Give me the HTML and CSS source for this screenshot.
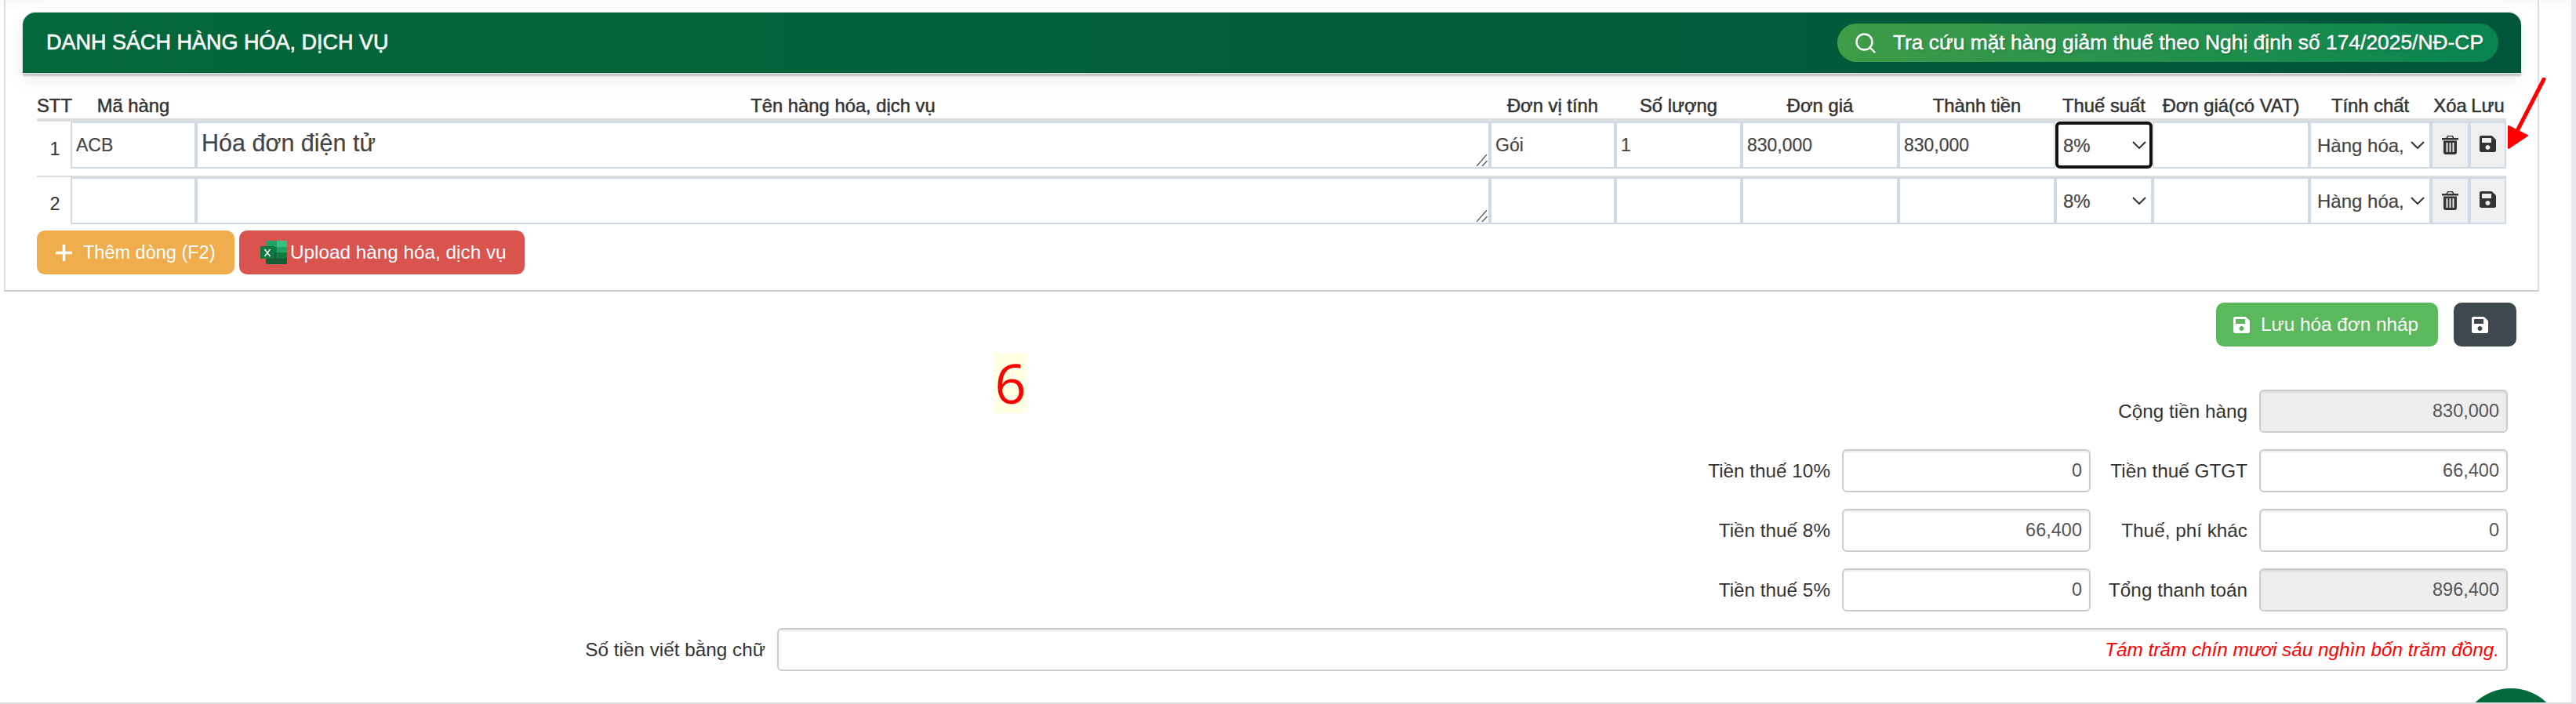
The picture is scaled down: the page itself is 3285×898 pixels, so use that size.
FILE: index.html
```html
<!DOCTYPE html>
<html lang="vi">
<head>
<meta charset="utf-8">
<title>Danh sách hàng hóa, dịch vụ</title>
<link rel="stylesheet" href="styles.css">
</head>
<body>
<svg class="defs" width="0" height="0" aria-hidden="true">
  <symbol id="i-save" viewBox="0 0 448 448"><path transform="translate(0 -32)" d="M433.941 129.941l-83.882-83.882A48 48 0 0 0 316.118 32H48C21.49 32 0 53.49 0 80v352c0 26.51 21.49 48 48 48h352c26.51 0 48-21.49 48-48V163.882a48 48 0 0 0-14.059-33.941zM224 416c-35.346 0-64-28.654-64-64 0-35.346 28.654-64 64-64s64 28.654 64 64c0 35.346-28.654 64-64 64zm96-304.52V212c0 6.627-5.373 12-12 12H76c-6.627 0-12-5.373-12-12V108c0-6.627 5.373-12 12-12h228.52c3.183 0 6.235 1.264 8.485 3.515l3.48 3.48A11.996 11.996 0 0 1 320 111.48z"/></symbol>
  <symbol id="i-trash" viewBox="0 0 21 24"><path d="M7 0h7l1.5 3H21v2.400H0V3h5.500zM8 1.300 7.300 3h6.400L13 1.300z"/><path fill-rule="evenodd" d="M2 6.500h17V21a3 3 0 0 1-3 3H5a3 3 0 0 1-3-3zM5.500 9v12h2V9zm4 0v12h2V9zm4 0v12h2V9z"/></symbol>
  <symbol id="i-chev" viewBox="0 0 18 10"><path d="M1 1l8 8 8-8" fill="none" stroke="#333" stroke-width="2"/></symbol>
  <symbol id="i-grip" viewBox="0 0 14 15"><path d="M0 15L13 0M7 15l6.500-7" fill="none" stroke="#555" stroke-width="1.300"/></symbol>
</svg>
<div class="page">
  <section class="card">
    <header class="card-head">
      <h2 class="card-title">DANH SÁCH HÀNG HÓA, DỊCH VỤ</h2>
      <button class="lookup" type="button">
        <svg class="lookup-icon" viewBox="0 0 26 26"><circle cx="11.500" cy="11.500" r="10" fill="none" stroke="#fff" stroke-width="2.400"/><path d="M18.500 18.500l6 6" stroke="#fff" stroke-width="2.400" stroke-linecap="round"/></svg>
        <span>Tra cứu mặt hàng giảm thuế theo Nghị định số 174/2025/NĐ-CP</span>
      </button>
    </header>
    <div class="card-body">
      <table class="items">
        <colgroup>
          <col class="c-stt"><col class="c-code"><col class="c-name"><col class="c-unit"><col class="c-qty"><col class="c-price"><col class="c-total"><col class="c-tax"><col class="c-vat"><col class="c-kind"><col class="c-del"><col class="c-save">
        </colgroup>
        <thead>
          <tr>
            <th>STT</th><th>Mã hàng</th><th>Tên hàng hóa, dịch vụ</th><th>Đơn vị tính</th><th>Số lượng</th><th>Đơn giá</th><th>Thành tiền</th><th>Thuế suất</th><th>Đơn giá(có VAT)</th><th>Tính chất</th><th>Xóa</th><th>Lưu</th>
          </tr>
        </thead>
        <tbody>
          <tr class="row-first">
            <td class="num">1</td>
            <td><input class="cell" value="ACB"></td>
            <td><div class="pick"><textarea class="cell cell-area">Hóa đơn điện tử</textarea><svg class="grip"><use href="#i-grip"/></svg></div></td>
            <td><input class="cell" value="Gói"></td>
            <td><input class="cell" value="1"></td>
            <td><input class="cell" value="830,000"></td>
            <td><input class="cell" value="830,000"></td>
            <td><div class="pick"><select class="cell cell-select is-focus"><option>8%</option></select><svg class="chev"><use href="#i-chev"/></svg></div></td>
            <td><input class="cell"></td>
            <td><div class="pick"><select class="cell cell-select kind"><option>Hàng hóa, dịch vụ</option></select><svg class="chev"><use href="#i-chev"/></svg></div></td>
            <td><button class="tool" type="button"><svg class="ico-trash"><use href="#i-trash"/></svg></button></td>
            <td><button class="tool" type="button"><svg class="ico-save"><use href="#i-save"/></svg></button></td>
          </tr>
          <tr class="row-next">
            <td class="num">2</td>
            <td><input class="cell"></td>
            <td><div class="pick"><textarea class="cell cell-area"></textarea><svg class="grip"><use href="#i-grip"/></svg></div></td>
            <td><input class="cell"></td>
            <td><input class="cell"></td>
            <td><input class="cell"></td>
            <td><input class="cell"></td>
            <td><div class="pick"><select class="cell cell-select"><option>8%</option></select><svg class="chev"><use href="#i-chev"/></svg></div></td>
            <td><input class="cell"></td>
            <td><div class="pick"><select class="cell cell-select kind"><option>Hàng hóa, dịch vụ</option></select><svg class="chev"><use href="#i-chev"/></svg></div></td>
            <td><button class="tool" type="button"><svg class="ico-trash"><use href="#i-trash"/></svg></button></td>
            <td><button class="tool" type="button"><svg class="ico-save"><use href="#i-save"/></svg></button></td>
          </tr>
        </tbody>
      </table>
      <div class="row-actions">
        <button class="btn btn-add" type="button">
          <svg class="ico-plus" viewBox="0 0 21 21"><path d="M10.500 0v21M0 10.500h21" stroke="#fff" stroke-width="3.400"/></svg>
          <span>Thêm dòng (F2)</span>
        </button>
        <button class="btn btn-upload" type="button">
          <svg class="ico-excel" viewBox="0 0 34 30">
            <rect x="7" width="27" height="30" rx="2" fill="#185c37"/>
            <rect x="20.500" width="13.500" height="8" fill="#33c481"/>
            <rect x="7" width="13.500" height="8" fill="#21a366"/>
            <rect x="20.500" y="8" width="13.500" height="7.500" fill="#21a366"/>
            <rect x="7" y="8" width="13.500" height="7.500" fill="#107c41"/>
            <rect x="20.500" y="15.500" width="13.500" height="7" fill="#107c41"/>
            <rect y="7" width="18" height="16" rx="1.500" fill="#0f7a40"/>
            <path d="M5.500 11l7 9M12.500 11l-7 9" stroke="#fff" stroke-width="1.500"/>
          </svg>
          <span>Upload hàng hóa, dịch vụ</span>
        </button>
      </div>
    </div>
  </section>

  <div class="save-bar">
    <button class="btn btn-draft" type="button"><svg class="ico-save"><use href="#i-save"/></svg><span>Lưu hóa đơn nháp</span></button>
    <button class="btn btn-dark" type="button"><svg class="ico-save"><use href="#i-save"/></svg></button>
  </div>

  <div class="totals">
    <label class="t-label t-second">Cộng tiền hàng</label>
    <input class="field is-readonly" value="830,000" readonly>
    <label class="t-label">Tiền thuế 10%</label>
    <input class="field" value="0">
    <label class="t-label">Tiền thuế GTGT</label>
    <input class="field" value="66,400">
    <label class="t-label">Tiền thuế 8%</label>
    <input class="field" value="66,400">
    <label class="t-label">Thuế, phí khác</label>
    <input class="field" value="0">
    <label class="t-label">Tiền thuế 5%</label>
    <input class="field" value="0">
    <label class="t-label">Tổng thanh toán</label>
    <input class="field is-readonly" value="896,400" readonly>
  </div>
  <div class="words">
    <label class="t-label">Số tiền viết bằng chữ</label>
    <input class="field field-words" value="Tám trăm chín mươi sáu nghìn bốn trăm đồng.">
  </div>

  <span class="step-mark">6</span>
  <svg class="arrow" viewBox="0 0 50 95"><path d="M47 2L13 68" stroke="#f00" stroke-width="5" stroke-linecap="round"/><path d="M2 62L26 74 2 90z" fill="#f00" stroke="#f00" stroke-width="2" stroke-linejoin="round"/></svg>
  <div class="fab"></div>
</div>
</body>
</html>
```

FILE: styles.css
```css
* { box-sizing: border-box; }
html, body { margin: 0; padding: 0; background: #fff; }
body { font-family: "Liberation Sans", Arial, sans-serif; font-size: 23px; color: #333; overflow: hidden; }
.defs { position: absolute; }
button, input, select, textarea { font-family: inherit; }

.page {
  position: relative;
  width: 3285px;
  height: 898px;
  overflow: hidden;
  border-right: 6px solid #e8e8ee;
  border-bottom: 2px solid #dcdcdc;
  background: linear-gradient(180deg, #f9f9f9 0, #fff 14px);
}

.card {
  width: 3233px;
  height: 372px;
  margin-left: 5px;
  padding: 16px 21px 0 22px;
  border: 2px solid #dcdcdc;
  border-top: 0;
  border-bottom-color: #cdcdcd;
  background: linear-gradient(180deg, #f9f9f9 0, #fff 14px);
}
.card-head {
  display: flex;
  align-items: center;
  justify-content: space-between;
  height: 77px;
  padding: 0 29px 0 30px;
  border-radius: 16px 16px 0 0;
  background: linear-gradient(90deg, #03683b, #01553a);
  box-shadow: 0 0 0 1px #e6e6e6, 0 4px 2px rgba(0, 0, 0, .2), 0 10px 24px rgba(0, 0, 0, .07);
}
.card-title {
  margin: 0;
  font-size: 27px;
  font-weight: 400;
  color: #fff;
  -webkit-text-stroke: .6px #fff;
  white-space: nowrap;
}
.lookup {
  display: flex;
  align-items: center;
  gap: 22px;
  height: 49px;
  padding: 0 19px 0 23px;
  border: 0;
  border-radius: 25px;
  background: linear-gradient(90deg, #3f9c47, #078450);
  color: #fff;
  font-size: 26.4px;
  -webkit-text-stroke: .5px #fff;
  text-shadow: 1px 1px 2px rgba(0, 0, 0, .35);
  white-space: nowrap;
}
.lookup-icon { width: 26px; height: 26px; }

.card-body { padding: 26px 19px 0 18px; }
.items { width: 3149px; table-layout: fixed; border-collapse: separate; border-spacing: 0; }
.c-stt { width: 43px; } .c-code { width: 160px; } .c-name { width: 1650px; } .c-unit { width: 160px; }
.c-qty { width: 161px; } .c-price { width: 200px; } .c-total { width: 200px; } .c-tax { width: 124px; }
.c-vat { width: 200px; } .c-kind { width: 155px; } .c-del { width: 49px; } .c-save { width: 47px; }

.items th {
  height: 36px;
  padding: 4px 0;
  font-size: 23.8px;
  line-height: 24px;
  font-weight: 400;
  color: #333;
  -webkit-text-stroke: .5px #333;
  text-align: center;
  white-space: nowrap;
  border-bottom: 4px solid #ddd;
}
.items td { padding: 0; vertical-align: top; }
.row-first td { height: 69px; padding-bottom: 9px; }
.row-next td { height: 62px; border-top: 2px solid #ddd; }
.items td.num { padding-top: 22px; text-align: center; font-size: 23.500px; padding-left: 3px; }
.row-next td.num { padding-top: 21px; }

.cell {
  display: block;
  width: 100%;
  height: 60px;
  margin: 0;
  padding: 0 5px;
  font-size: 23px;
  color: #444;
  -webkit-text-stroke: .2px #444;
  background: #fff;
  border: 2px solid #d0d9e6;
  border-radius: 0;
  outline: 0;
}
.cell-area { padding: 7px 5px 0; font-size: 30.5px; line-height: 36px; resize: none; }
.cell-select { appearance: none; -webkit-appearance: none; padding: 0 32px 0 8px; font-size: 24px; }
.is-focus { border: 4px solid #111; border-radius: 6px; padding-left: 6px; box-shadow: 0 0 0 1px #fff; position: relative; }
.pick { position: relative; }
.chev { position: absolute; right: 8px; top: 25px; width: 18px; height: 10px; pointer-events: none; }
.grip { position: absolute; right: 3px; bottom: 3px; width: 14px; height: 15px; pointer-events: none; }

.tool {
  display: flex;
  justify-content: center;
  width: 100%;
  height: 60px;
  padding: 16px 0 0;
  background: #efefef;
  border: 2px solid #d0d9e6;
  border-radius: 0;
}
.ico-trash { width: 21px; height: 24px; fill: #333; }
.ico-save { width: 21px; height: 21px; fill: #333; }

.row-actions { display: flex; gap: 6px; margin-top: 8px; }
.btn {
  display: flex;
  align-items: center;
  height: 56px;
  border: 0;
  border-radius: 10px;
  color: #fff;
  font-size: 24.3px;
  white-space: nowrap;
}
.btn-add { width: 252px; padding: 0 0 0 24px; gap: 14px; background: #f0ad4e; font-size: 23.500px; }
.ico-plus { width: 21px; height: 21px; }
.btn-upload { width: 364px; padding: 0 0 0 27px; gap: 4px; background: #d9534f; }
.ico-excel { width: 34px; height: 30px; }

.save-bar { display: flex; justify-content: flex-end; gap: 20px; margin-top: 14px; padding-right: 70px; }
.btn-draft { width: 283px; padding: 0 0 0 22px; gap: 14px; background: #5cb85c; }
.btn-draft .ico-save, .btn-dark .ico-save { fill: #fff; }
.btn-dark { width: 80px; padding: 0 0 0 23px; background: #3e484d; }

.totals {
  display: grid;
  grid-template-columns: 1fr 317px 185px 317px;
  grid-auto-rows: 55px;
  column-gap: 15px;
  row-gap: 21px;
  margin-top: 55px;
  padding-right: 81px;
}
.t-label { align-self: center; text-align: right; color: #333; font-size: 24.3px; white-space: nowrap; }
.t-second { grid-column: 3; }
.field {
  width: 100%;
  height: 55px;
  padding: 0 9px;
  text-align: right;
  font-size: 23.500px;
  color: #555;
  background: #fff;
  border: 2px solid #ccc;
  border-radius: 6px;
  box-shadow: inset 0 2px 2px rgba(0, 0, 0, .075);
  outline: 0;
}
.is-readonly { background: #eee; }
.words {
  display: grid;
  grid-template-columns: 1fr 2207px;
  column-gap: 15px;
  margin-top: 21px;
  padding-right: 81px;
}
.field-words { color: #f00; font-style: italic; font-size: 24.3px; }

.step-mark {
  position: absolute;
  left: 1267px;
  top: 450px;
  width: 43px;
  height: 77px;
  background: #ffffe4;
  color: #f00;
  font-family: "Open Sans", "Noto Sans", sans-serif;
  font-size: 70px;
  line-height: 77px;
  text-align: center;
}
.arrow { position: absolute; left: 3197px; top: 99px; width: 50px; height: 95px; }
.fab {
  position: absolute;
  left: 3136px;
  top: 878px;
  width: 132px;
  height: 132px;
  border-radius: 50%;
  background: #03683b;
}
```
